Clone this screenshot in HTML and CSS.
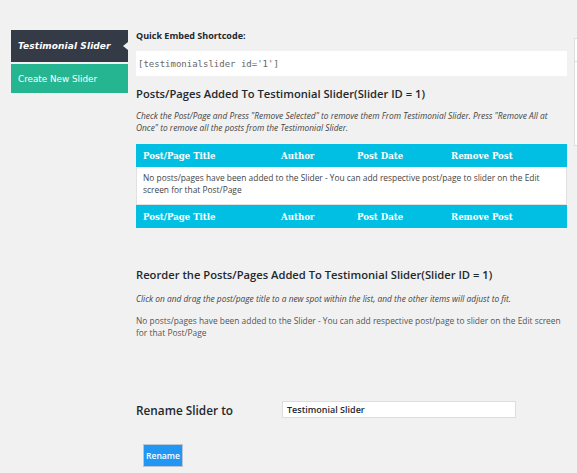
FILE: index.html
```html
<!DOCTYPE html>
<html>
<head>
<meta charset="utf-8">
<link rel="stylesheet" href="styles.css">
</head>
<body>
<div class="wrap">
  <nav class="sidebar">
    <div class="tab active">Testimonial Slider</div>
    <div class="tab create">Create New Slider</div>
  </nav>
  <main class="main">
    <div class="embed-label">Quick Embed Shortcode:</div>
    <div class="shortcode">[testimonialslider id='1']</div>
    <h2 class="heading">Posts/Pages Added To Testimonial Slider(Slider ID = 1)</h2>
    <p class="note">Check the Post/Page and Press "Remove Selected" to remove them From Testimonial Slider. Press "Remove All at Once" to remove all the posts from the Testimonial Slider.</p>
    <div class="table">
      <div class="thead">
        <span class="c1">Post/Page Title</span><span class="c2">Author</span><span class="c3">Post Date</span><span class="c4">Remove Post</span>
      </div>
      <div class="tbody">No posts/pages have been added to the Slider - You can add respective post/page to slider on the Edit screen for that Post/Page</div>
      <div class="thead">
        <span class="c1">Post/Page Title</span><span class="c2">Author</span><span class="c3">Post Date</span><span class="c4">Remove Post</span>
      </div>
    </div>
    <h2 class="heading reorder">Reorder the Posts/Pages Added To Testimonial Slider(Slider ID = 1)</h2>
    <p class="note note2">Click on and drag the post/page title to a new spot within the list, and the other items will adjust to fit.</p>
    <p class="plain">No posts/pages have been added to the Slider - You can add respective post/page to slider on the Edit screen for that Post/Page</p>
    <div class="rename-row">
      <label class="rename-label">Rename Slider to</label>
      <div class="rename-input">Testimonial Slider</div>
    </div>
    <button class="rename-btn">Rename</button>
  </main>
  <aside class="side-panel"><div class="side-head"></div></aside>
</div>
</body>
</html>
```
FILE: styles.css
```css
* { box-sizing: border-box; }
html, body { margin: 0; padding: 0; }
body {
  background: #f1f1f1;
  font-family: "Open Sans", "Noto Sans", sans-serif;
  color: #23282d;
  width: 577px;
  height: 473px;
  overflow: hidden;
}
.wrap {
  display: flex;
  align-items: flex-start;
  padding: 30px 0 0 11px;
}
.sidebar {
  width: 117px;
  flex: none;
  display: flex;
  flex-direction: column;
  gap: 2px;
}
.tab {
  color: #fff;
  padding-left: 7px;
  display: flex;
  align-items: center;
  font-family: "DejaVu Sans", sans-serif;
}
.tab.active {
  position: relative;
  background: #343a46;
  height: 32px;
  font-weight: bold;
  font-style: italic;
  font-size: 9px;
  letter-spacing: 0.1px;
}
.tab.active::after {
  content: "";
  position: absolute;
  right: 0;
  top: 12px;
  border-style: solid;
  border-width: 4px 5px 4px 0;
  border-color: transparent #f1f1f1 transparent transparent;
}
.tab.create {
  background: #26b591;
  height: 29px;
  font-size: 8.8px;
}
.main {
  width: 431px;
  margin-left: 8px;
  flex: none;
}
.embed-label {
  font-weight: bold;
  font-size: 9px;
  line-height: 12px;
}
.shortcode {
  margin-top: 9px;
  background: #fff;
  height: 25px;
  padding-left: 2px;
  display: flex;
  align-items: center;
  font-family: "DejaVu Sans Mono", monospace;
  font-size: 9px;
  color: #666;
}
.heading {
  margin: 10px 0 0;
  font-size: 11.2px;
  font-weight: 600;
  line-height: 16px;
}
.note {
  margin: 8px 0 0;
  font-style: italic;
  font-size: 8.4px;
  line-height: 12px;
  color: #444;
}
.table {
  margin-top: 10px;
}
.thead {
  background: #00bfe3;
  height: 23px;
  display: flex;
  align-items: center;
  color: #fff;
  font-family: "DejaVu Serif", serif;
  font-weight: bold;
  font-size: 8.6px;
}
.thead span { display: block; }
.c1 { width: 145px; padding-left: 7px; }
.c2 { width: 76px; }
.c3 { width: 94px; }
.c4 { flex: 1; }
.tbody {
  background: #fff;
  border: 1px solid #e1e1e1;
  border-top: none;
  padding: 5px 6px 6px;
  font-size: 8.4px;
  line-height: 12px;
  color: #444;
  height: 38px;
}
.heading.reorder {
  margin-top: 39px;
}
.note2 {
  margin-top: 10px;
}
.plain {
  margin: 10px 0 0;
  font-size: 8.4px;
  line-height: 12px;
  color: #555;
}
.rename-row {
  display: flex;
  align-items: center;
  margin-top: 62px;
}
.rename-label {
  width: 146px;
  font-size: 11.8px;
  font-weight: 600;
}
.rename-input {
  width: 234px;
  height: 17px;
  background: #fff;
  border: 1px solid #ddd;
  font-size: 9px;
  font-weight: 600;
  padding-left: 4px;
  display: flex;
  align-items: center;
}
.rename-btn {
  margin: 26px 0 0 7px;
  width: 40px;
  height: 23px;
  background: #2196f3;
  border: 1px solid #b9c6d3;
  color: #fff;
  font-family: "Open Sans", sans-serif;
  font-size: 8.6px;
  font-weight: 600;
  padding: 0;
}
.side-panel {
  margin-left: 7px;
  margin-top: 8px;
  flex: none;
  width: 20px;
  height: 108px;
  background: #fff;
  border: 1px solid #ddd;
}
.side-head {
  height: 23px;
  border-bottom: 1px solid #ddd;
}
```
